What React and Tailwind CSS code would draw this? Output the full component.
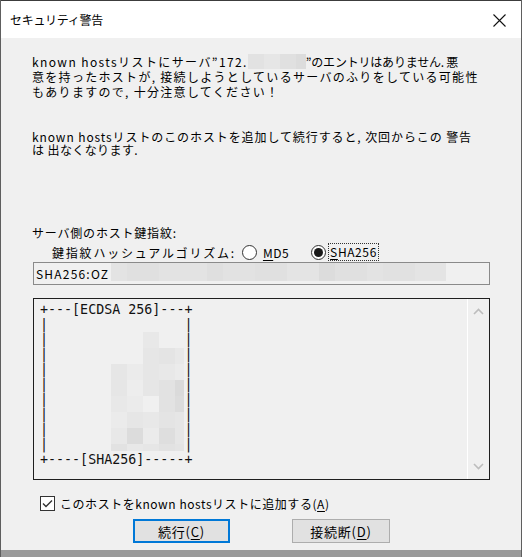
import React from "react";

const jp = "font-['Noto_Sans_CJK_JP','Noto_Sans',sans-serif]";
const mono = "font-['DejaVu_Sans_Mono','Liberation_Mono',monospace]";

const artBlur = [
  ["", "", "bg-[#e8e8e8]", "", ""],
  ["", "", "bg-[#e6e6e6]", "bg-[#e4e4e4]", "bg-[#e8e8e8]"],
  ["bg-[#e6e6e6]", "bg-[#ebebeb]", "bg-[#e6e6e6]", "bg-[#e8e8e8]", "bg-[#ebebeb]"],
  ["bg-[#e6e6e6]", "bg-[#ededed]", "bg-[#e6e6e6]", "bg-[#e2e2e2]", "bg-[#dadada]"],
  ["bg-[#e8e8e8]", "bg-[#ebebeb]", "bg-[#f0f0f0]", "bg-[#e2e2e2]", "bg-[#dcdcdc]"],
  ["bg-[#ebebeb]", "bg-[#e6e6e6]", "bg-[#e8e8e8]", "bg-[#e4e4e4]", "bg-[#e6e6e6]"],
  ["bg-[#e8e8e8]", "bg-[#dcdcdc]", "bg-[#ebebeb]", "bg-[#dedede]", "bg-[#e6e6e6]"],
  ["bg-[#e2e2e2]", "bg-[#e8e8e8]", "bg-[#e6e6e6]", "bg-[#e2e2e2]", "bg-[#e4e4e4]"],
];
const colW = ["w-[16px]", "w-[16px]", "w-[16px]", "w-[16px]", "w-[9px]"];

const hashBlur = [
  ["w-[16px]", "bg-[#e3e3e3]"],
  ["w-[32px]", "bg-[#e0e0e0]"],
  ["w-[48px]", "bg-[#e3e3e3]"],
  ["w-[16px]", "bg-[#dfdfdf]"],
  ["w-[32px]", "bg-[#e2e2e2]"],
  ["w-[32px]", "bg-[#e0e0e0]"],
  ["w-[32px]", "bg-[#e4e4e4]"],
  ["w-[16px]", "bg-[#dcdcdc]"],
  ["w-[32px]", "bg-[#e0e0e0]"],
  ["w-[16px]", "bg-[#e3e3e3]"],
  ["w-[32px]", "bg-[#e1e1e1]"],
  ["w-[31px]", "bg-[#e4e4e4]"],
];

const ipBlur = [
  ["w-[16px]", "bg-[#e2e2e2]"],
  ["w-[16px]", "bg-[#e6e6e6]"],
  ["w-[16px]", "bg-[#e0e0e0]"],
  ["w-[10px]", "bg-[#dcdcdc]"],
];

export default function App() {
  const artLines = [
    "+---[ECDSA 256]---+",
    ...Array.from({ length: 9 }, () => "|                 |"),
    "+----[SHA256]-----+",
  ];
  return (
    <div className={`w-[522px] h-[557px] flex flex-col bg-[#f0f0f0] text-black ${jp} text-[12px] leading-[15px] border-l border-r border-[#5e5e5e] overflow-hidden`}>
      {/* title bar */}
      <div className="h-[38px] shrink-0 bg-white flex items-center justify-between pl-[9px] pr-[15px] border-t border-[#3c3c3c]">
        <span className="text-[12px] text-black tracking-[-0.3px]">セキュリティ警告</span>
        <svg width="13" height="13" viewBox="0 0 13 13" className="mt-[1px]">
          <path d="M0.5 0.5 L12.5 12.5 M12.5 0.5 L0.5 12.5" stroke="#111" strokeWidth="1.1" fill="none" />
        </svg>
      </div>

      <div className="flex-1 flex flex-col pl-[31px] pr-[20px]">
        <div className="pt-[16px] whitespace-nowrap">
          <div className="flex items-center">
            <span className="tracking-[1.4px]">known hostsリストにサーバ”172.</span>
            <span className="inline-flex h-[15px]">
              {ipBlur.map(([w, c], i) => (
                <span key={i} className={`${w} ${c} h-[15px]`} />
              ))}
            </span>
            <span className="tracking-[-0.2px]">”のエントリはありません. 悪</span>
          </div>
          <div className="tracking-[1.3px]">意を持ったホストが, 接続しようとしているサーバのふりをしている可能性</div>
          <div className="tracking-[1.3px]">もありますので, 十分注意してください！</div>
        </div>

        <div className="mt-[31px] whitespace-nowrap leading-[13px]">
          <div className="tracking-[0.9px]">known hostsリストのこのホストを追加して続行すると, 次回からこの 警告</div>
          <div className="tracking-[0.4px]">は 出なくなります.</div>
        </div>

        <div className="mt-[69px] whitespace-nowrap tracking-[0.8px]">サーバ側のホスト鍵指紋:</div>

        <div className="mt-[3px] flex items-center h-[18px] whitespace-nowrap">
          <span className="ml-[20px] tracking-[1.8px]">鍵指紋ハッシュアルゴリズム:</span>
          <span className="ml-[6px] w-[15px] h-[15px] rounded-full border border-[#333] bg-white" />
          <span className="ml-[6px] tracking-[0.5px]">
            <span className="underline underline-offset-2">M</span>D5
          </span>
          <span className="ml-[22px] w-[15px] h-[15px] rounded-full border border-[#333] bg-white flex items-center justify-center">
            <span className="w-[9px] h-[9px] rounded-full bg-[#1a1a1a]" />
          </span>
          <span className="ml-[3px] px-[1px] outline-1 outline-dotted outline-[#333] leading-[16px] tracking-[0.6px]">
            <span className="underline underline-offset-2">S</span>HA256
          </span>
        </div>

        <div className="mt-[1px] ml-[1px] h-[23px] w-[457px] border border-[#8a8a8a] bg-[#f0f0f0] flex items-center pl-[2px]">
          <span className="tracking-[1.2px]">SHA256:OZ</span>
          <span className="ml-[2px] flex h-[18px] self-start">
            {hashBlur.map(([w, c], i) => (
              <span key={i} className={`${w} ${c} h-[18px]`} />
            ))}
          </span>
        </div>

        <div className="mt-[13px] ml-[1px] h-[182px] w-[457px] border border-[#1e1e1e] bg-[#f0f0f0] flex">
          <div className={`relative flex-1 pl-[6px] pt-[3px] ${mono} text-[13.333px] leading-[15px] whitespace-pre text-[#111]`}>
            {artLines.map((l, i) => (
              <div key={i}>{l}</div>
            ))}
            <div className="absolute left-[77px] top-[33px] flex flex-col">
              {artBlur.map((row, r) => (
                <div key={r} className={`flex ${r === 7 ? "h-[7px]" : "h-[16px]"}`}>
                  {row.map((c, ci) => (
                    <span key={ci} className={`${colW[ci]} h-full ${c}`} />
                  ))}
                </div>
              ))}
            </div>
          </div>
          <div className="w-[22px] border-l border-white flex flex-col justify-between items-center py-[9px]">
            <svg width="11" height="7" viewBox="0 0 11 7">
              <path d="M1 6 L5.5 1.5 L10 6" stroke="#bdbdbd" strokeWidth="1.6" fill="none" />
            </svg>
            <svg width="11" height="7" viewBox="0 0 11 7">
              <path d="M1 1 L5.5 5.5 L10 1" stroke="#bdbdbd" strokeWidth="1.6" fill="none" />
            </svg>
          </div>
        </div>

        <div className="mt-[16px] ml-[8px] flex items-center whitespace-nowrap">
          <span className="w-[15px] h-[15px] border border-[#333] bg-white flex items-center justify-center">
            <svg width="11" height="9" viewBox="0 0 11 9">
              <path d="M1 4.5 L4 7.5 L10 1.5" stroke="#333" strokeWidth="1.4" fill="none" />
            </svg>
          </span>
          <span className="ml-[5px] tracking-[0.55px]">
            このホストをknown hostsリストに追加する(<span className="underline underline-offset-2">A</span>)
          </span>
        </div>

        <div className="mt-[8px] flex">
          <button className="ml-[101px] w-[97px] h-[24px] border-2 border-[#0078d7] bg-[#e1e1e1] flex items-center justify-center text-[13px] tracking-[0.8px]">
            続行(<span className="underline underline-offset-2">C</span>)
          </button>
          <button className="ml-[62px] w-[98px] h-[24px] border border-[#adadad] bg-[#e1e1e1] flex items-center justify-center text-[13px] tracking-[0.8px]">
            接続断(<span className="underline underline-offset-2">D</span>)
          </button>
        </div>
      </div>
      <div className="h-[7px] shrink-0 bg-[#9a9a9a]" />
    </div>
  );
}
